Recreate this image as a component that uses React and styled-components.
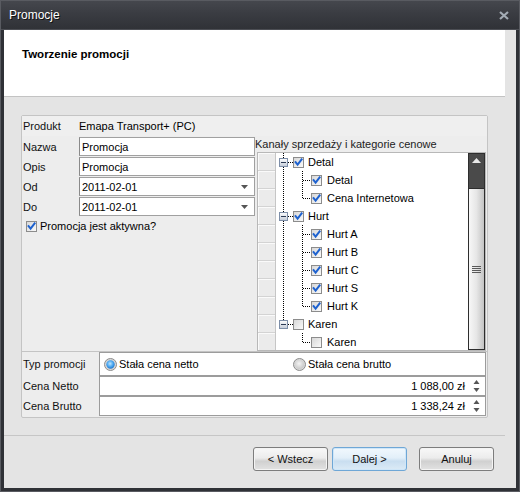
import React from "react";
import styled, { createGlobalStyle } from "styled-components";

const GlobalStyle = createGlobalStyle`
  html, body {
    margin: 0;
    padding: 0;
    background: #2e3035;
  }
  body {
    font-family: "Liberation Sans", Arial, sans-serif;
    font-size: 11px;
    color: #000;
  }
  * {
    box-sizing: border-box;
  }
`;

const tree = [
  {
    label: "Detal",
    checked: true,
    children: [
      { label: "Detal", checked: true },
      { label: "Cena Internetowa", checked: true },
    ],
  },
  {
    label: "Hurt",
    checked: true,
    children: [
      { label: "Hurt A", checked: true },
      { label: "Hurt B", checked: true },
      { label: "Hurt C", checked: true },
      { label: "Hurt S", checked: true },
      { label: "Hurt K", checked: true },
    ],
  },
  {
    label: "Karen",
    checked: false,
    children: [{ label: "Karen", checked: false }],
  },
];

function flatten(nodes) {
  const rows = [];
  nodes.forEach((node, i) => {
    const last = i === nodes.length - 1;
    rows.push({ level: 0, label: node.label, checked: node.checked, last });
    node.children.forEach((child, j) => {
      rows.push({
        level: 1,
        label: child.label,
        checked: child.checked,
        last: j === node.children.length - 1,
        parentLast: last,
      });
    });
  });
  return rows;
}

function CheckIcon({ checked }) {
  return (
    <svg width="11" height="11" viewBox="0 0 11 11" style={{ flexShrink: 0 }}>
      <defs>
        <linearGradient id="cbfill" x1="0" y1="0" x2="1" y2="1">
          <stop offset="0" stopColor="#d6d6d6" />
          <stop offset="1" stopColor="#fbfbfb" />
        </linearGradient>
      </defs>
      <rect x="0.5" y="0.5" width="10" height="10" fill="url(#cbfill)" stroke="#8c8c8c" />
      {checked && (
        <path
          d="M2.6 5.2 L4.6 7.6 L8.6 2.4"
          fill="none"
          stroke="#1e62cf"
          strokeWidth="2"
          strokeLinecap="square"
        />
      )}
    </svg>
  );
}

function Connector({ row }) {
  const dot = { stroke: "#000", strokeDasharray: "1 1", shapeRendering: "crispEdges" };
  if (row.level === 0) {
    return (
      <svg width="17" height="18" style={{ flexShrink: 0 }}>
        <line x1="7.5" y1="0" x2="7.5" y2={row.last ? 5 : 18} {...dot} />
        <line x1="12" y1="9.5" x2="17" y2="9.5" {...dot} />
        <defs>
          <linearGradient id="expfill" x1="0" y1="0" x2="0" y2="1">
            <stop offset="0" stopColor="#ffffff" />
            <stop offset="1" stopColor="#c3cbd8" />
          </linearGradient>
        </defs>
        <rect x="3.5" y="5.5" width="8" height="8" fill="url(#expfill)" stroke="#7d8ea8" shapeRendering="crispEdges" />
        <line x1="5" y1="9.5" x2="10" y2="9.5" stroke="#2b3a55" shapeRendering="crispEdges" />
      </svg>
    );
  }
  return (
    <svg width="35" height="18" style={{ flexShrink: 0 }}>
      {!row.parentLast && <line x1="7.5" y1="0" x2="7.5" y2="18" {...dot} />}
      <line x1="26.5" y1="0" x2="26.5" y2={row.last ? 10 : 18} {...dot} />
      <line x1="27" y1="9.5" x2="35" y2="9.5" {...dot} />
    </svg>
  );
}

function DropArrow() {
  return (
    <svg width="7" height="4" viewBox="0 0 7 4">
      <path d="M0 0 H7 L3.5 4 Z" fill="#555" />
    </svg>
  );
}

function Spinner() {
  return (
    <svg width="7" height="14" viewBox="0 0 7 14">
      <path d="M0.5 5 L3.5 1 L6.5 5 Z" fill="#555" />
      <path d="M0.5 9 L3.5 13 L6.5 9 Z" fill="#555" />
    </svg>
  );
}

function Radio({ on }) {
  return (
    <svg width="13" height="13" viewBox="0 0 13 13" style={{ flexShrink: 0 }}>
      <defs>
        <radialGradient id="radOn" cx="0.45" cy="0.4" r="0.6">
          <stop offset="0" stopColor="#bfe6ff" />
          <stop offset="0.6" stopColor="#49a6f0" />
          <stop offset="1" stopColor="#2377cc" />
        </radialGradient>
        <radialGradient id="radOff" cx="0.45" cy="0.4" r="0.6">
          <stop offset="0" stopColor="#f4f4f4" />
          <stop offset="1" stopColor="#c8c8c8" />
        </radialGradient>
      </defs>
      <circle cx="6.5" cy="6.5" r="6" fill="#d8d8d8" stroke="#8d8d8d" />
      <circle cx="6.5" cy="6.5" r={on ? 4.2 : 4.6} fill={on ? "url(#radOn)" : "url(#radOff)"} />
    </svg>
  );
}

function CloseIcon() {
  return (
    <svg width="10" height="9" viewBox="0 0 10 9">
      <path d="M1 1 L9 8 M9 1 L1 8" stroke="#a3abb4" strokeWidth="2.2" />
    </svg>
  );
}

export default function App() {
  const rows = flatten(tree);
  return (
    <>
      <GlobalStyle />
      <Window>
        <TitleBar>
          <Title>Promocje</Title>
          <CloseIcon />
        </TitleBar>
        <Client>
          <Header>Tworzenie promocji</Header>
          <Body>
            <Panel>
              <ProductRow>
                <Label>Produkt</Label>
                <span>Emapa Transport+ (PC)</span>
              </ProductRow>
              <Split>
                <LeftCol>
                  <FieldRow>
                    <Label>Nazwa</Label>
                    <Input>Promocja</Input>
                  </FieldRow>
                  <FieldRow>
                    <Label>Opis</Label>
                    <Input>Promocja</Input>
                  </FieldRow>
                  <FieldRow>
                    <Label>Od</Label>
                    <Input $combo>
                      2011-02-01
                      <DropArrow />
                    </Input>
                  </FieldRow>
                  <FieldRow>
                    <Label>Do</Label>
                    <Input $combo>
                      2011-02-01
                      <DropArrow />
                    </Input>
                  </FieldRow>
                  <CheckRow>
                    <CheckIcon checked />
                    Promocja jest aktywna?
                  </CheckRow>
                </LeftCol>
                <RightCol>
                  <Caption>Kanały sprzedaży i kategorie cenowe</Caption>
                  <TreeBox>
                    <RowHeads>
                      {rows.map((r, i) => (
                        <RowHead key={i} />
                      ))}
                    </RowHeads>
                    <TreeArea>
                      {rows.map((r, i) => (
                        <TreeRow key={i}>
                          <Connector row={r} />
                          <CheckIcon checked={r.checked} />
                          <TreeLabel $level={r.level}>{r.label}</TreeLabel>
                        </TreeRow>
                      ))}
                    </TreeArea>
                    <Scrollbar>
                      <ScrollTop>
                        <svg width="9" height="5" viewBox="0 0 9 5">
                          <path d="M0 5 L4.5 0 L9 5 Z" fill="#e8e8e8" />
                        </svg>
                      </ScrollTop>
                      <Thumb>
                        <Grip />
                        <Grip />
                        <Grip />
                        <Grip />
                      </Thumb>
                    </Scrollbar>
                  </TreeBox>
                </RightCol>
              </Split>
              <PriceSection>
                <PriceLabel>Typ promocji</PriceLabel>
                <TypeBox>
                  <Option $width={189}>
                    <Radio on />
                    Stała cena netto
                  </Option>
                  <Option>
                    <Radio />
                    Stała cena brutto
                  </Option>
                </TypeBox>
                <PriceLabel>Cena Netto</PriceLabel>
                <NumBox>
                  1 088,00 zł
                  <Spinner />
                </NumBox>
                <PriceLabel>Cena Brutto</PriceLabel>
                <NumBox>
                  1 338,24 zł
                  <Spinner />
                </NumBox>
              </PriceSection>
            </Panel>
          </Body>
          <Footer>
            <Button>&lt; Wstecz</Button>
            <Button $primary>Dalej &gt;</Button>
            <Button $gap>Anuluj</Button>
          </Footer>
        </Client>
      </Window>
    </>
  );
}

const Window = styled.div`
  width: 520px;
  height: 492px;
  display: flex;
  flex-direction: column;
  background: #2f3136;
  border: 1px solid #595b61;
`;

const TitleBar = styled.div`
  height: 29px;
  display: flex;
  align-items: center;
  justify-content: space-between;
  padding: 0 10px 0 8px;
  background: linear-gradient(#45474d, #3a3c42 45%, #303237);
  border-bottom: 1px solid #4c4e54;
`;

const Title = styled.div`
  font-size: 12px;
  color: #ffffff;
  text-shadow: 1px 1px 0 #111;
  line-height: 14px;
`;

const Client = styled.div`
  flex: 1;
  margin: 0 3px 3px 3px;
  background: #e4e4e4;
  display: flex;
  flex-direction: column;
`;

const Header = styled.div`
  height: 67px;
  margin-right: 11px;
  padding: 17px 0 0 18px;
  background: #ffffff;
  border-bottom: 1px solid #c3c3c3;
  font-weight: bold;
  font-size: 11.5px;
  line-height: 14px;
`;

const Body = styled.div`
  padding: 18px 28px 0 17px;
`;

const Panel = styled.div`
  height: 303px;
  background: #ededed;
  border: 1px solid #c4c4c4;
  border-radius: 2px;
  display: flex;
  flex-direction: column;
`;

const ProductRow = styled.div`
  height: 20px;
  display: flex;
  align-items: center;
  padding-left: 1px;
  background: #efefef;
`;

const Label = styled.span`
  width: 56px;
  flex-shrink: 0;
  color: #111;
`;

const Split = styled.div`
  height: 215px;
  display: flex;
`;

const LeftCol = styled.div`
  width: 233px;
  display: flex;
  flex-direction: column;
  padding-left: 1px;
`;

const FieldRow = styled.div`
  height: 20px;
  display: flex;
  align-items: center;
  padding-top: 1px;
`;

const Input = styled.div`
  width: 177px;
  height: 19px;
  display: flex;
  align-items: center;
  justify-content: space-between;
  padding: 0 ${(p) => (p.$combo ? "6px" : "2px")} 0 2px;
  background: #ffffff;
  border: 1px solid #a0a0a0;
  border-left-color: #8a8a8a;
`;

const CheckRow = styled.div`
  display: flex;
  align-items: center;
  gap: 3px;
  margin-top: 4px;
  padding-left: 3px;
`;

const RightCol = styled.div`
  flex: 1;
  display: flex;
  flex-direction: column;
`;

const Caption = styled.div`
  height: 16px;
  line-height: 16px;
  color: #222;
`;

const TreeBox = styled.div`
  flex: 1;
  margin: 0 1px 0 2px;
  display: flex;
  border: 1px solid #b8b8b8;
  overflow: hidden;
`;

const RowHeads = styled.div`
  width: 18px;
  display: flex;
  flex-direction: column;
  border-right: 1px solid #c6c6c6;
  background: #ebebeb;
`;

const RowHead = styled.div`
  height: 18px;
  flex-shrink: 0;
  border-bottom: 1px solid #d3d3d3;
  box-shadow: inset 1px 1px 0 #fafafa;
`;

const TreeArea = styled.div`
  flex: 1;
  background: #ffffff;
  display: flex;
  flex-direction: column;
`;

const TreeRow = styled.div`
  height: 18px;
  flex-shrink: 0;
  display: flex;
  align-items: center;
`;

const TreeLabel = styled.span`
  margin-left: ${(p) => (p.$level ? 5 : 4)}px;
  white-space: nowrap;
`;

const Scrollbar = styled.div`
  width: 17px;
  display: flex;
  flex-direction: column;
  border: 1px solid #2d2d2d;
  background: #4a4a4a;
`;

const ScrollTop = styled.div`
  height: 34px;
  display: flex;
  justify-content: center;
  padding-top: 4px;
`;

const Thumb = styled.div`
  flex: 1;
  display: flex;
  flex-direction: column;
  align-items: center;
  justify-content: center;
  gap: 1px;
  border-top: 1px solid #2d2d2d;
  background: linear-gradient(to right, #f7f7f7, #e6e6e6 50%, #c4c4c4);
`;

const Grip = styled.div`
  width: 9px;
  height: 1px;
  background: #5a5a5a;
`;

const PriceSection = styled.div`
  flex: 1;
  display: grid;
  grid-template-columns: 76px 1fr;
  grid-template-rows: 24px 20px 20px;
  border-top: 1px solid #c4c4c4;
  padding-left: 1px;
`;

const PriceLabel = styled.div`
  display: flex;
  align-items: center;
  color: #111;
`;

const TypeBox = styled.div`
  display: flex;
  align-items: center;
  margin-right: 1px;
  padding-left: 4px;
  background: #ffffff;
  border: 1px solid #9c9c9c;
`;

const Option = styled.div`
  display: flex;
  align-items: center;
  gap: 2px;
  width: ${(p) => (p.$width ? `${p.$width}px` : "auto")};
`;

const NumBox = styled.div`
  display: flex;
  align-items: center;
  justify-content: flex-end;
  gap: 8px;
  margin-right: 1px;
  padding-right: 5px;
  background: #ffffff;
  border: 1px solid #9c9c9c;
`;

const Footer = styled.div`
  margin: 17px 11px 0 0;
  border-top: 1px solid #c6c6c6;
  padding: 11px 11px 0 0;
  display: flex;
  justify-content: flex-end;
  gap: 4px;
`;

const Button = styled.div`
  width: 75px;
  height: 24px;
  display: flex;
  align-items: center;
  justify-content: center;
  margin-left: ${(p) => (p.$gap ? "8px" : "0")};
  border: 1px solid ${(p) => (p.$primary ? "#6fa7d6" : "#7d7d7d")};
  border-radius: 3px;
  color: #111;
  background: ${(p) =>
    p.$primary
      ? "linear-gradient(#f1f8fd, #e2eff9 45%, #c9def0 60%, #dcebf6)"
      : "linear-gradient(#f8f8f8, #ececec 45%, #d0d0d0 60%, #e2e2e2)"};
  box-shadow: inset 0 0 0 1px ${(p) => (p.$primary ? "#cfe6f8" : "#f4f4f4")};
`;
